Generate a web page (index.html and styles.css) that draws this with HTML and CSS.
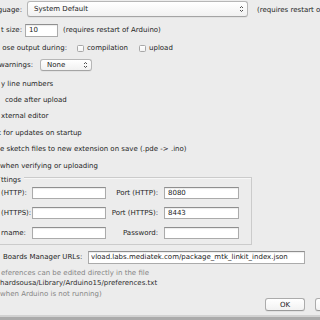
FILE: index.html
```html
<!DOCTYPE html>
<html>
<head>
<meta charset="utf-8">
<link rel="stylesheet" href="styles.css">
</head>
<body>
<div class="dlg">
  <div class="row r1">
    <span class="lab w22">guage:</span>
    <div class="combo c1"><span>System Default</span><svg class="arr" width="5" height="8" viewBox="0 0 5 8"><path d="M1 3L2.5 1.5L4 3M1 5L2.5 6.5L4 5"/></svg></div>
    <span class="note n1">(requires restart of Arduino)</span>
  </div>
  <div class="row r2">
    <span class="lab w22">t size:</span>
    <input class="field f-size" value="10">
    <span class="note n2">(requires restart of Arduino)</span>
  </div>
  <div class="row r3">
    <span class="lab w67">ose output during:</span>
    <span class="cb cb1"></span><span class="cbt ct1">compilation</span>
    <span class="cb cb2"></span><span class="cbt">upload</span>
  </div>
  <div class="row r4">
    <span class="lab w33">warnings:</span>
    <div class="combo c2"><span>None</span><svg class="arr" width="5" height="8" viewBox="0 0 5 8"><path d="M1 3L2.5 1.5L4 3M1 5L2.5 6.5L4 5"/></svg></div>
  </div>
  <div class="row chk h16 p1">y line numbers</div>
  <div class="row chk h16 p5">code after upload</div>
  <div class="row chk h16 p1">xternal editor</div>
  <div class="row chk h17 pk">k for updates on startup</div>
  <div class="row chk h16 p0">e sketch files to new extension on save (.pde -&gt; .ino)</div>
  <div class="row chk h17 p0">when verifying or uploading</div>
  <div class="group">
    <span class="group-title">ttings</span>
    <div class="row prow">
      <span class="pl">(HTTP):</span><input class="field pf" value="">
      <span class="pl2">Port (HTTP):</span><input class="field pf2" value="8080">
    </div>
    <div class="row prow">
      <span class="pl">(HTTPS):</span><input class="field pf" value="">
      <span class="pl2">Port (HTTPS):</span><input class="field pf2" value="8443">
    </div>
    <div class="row prow">
      <span class="pl">rname:</span><input class="field pf" value="">
      <span class="pl2">Password:</span><input class="field pf2" value="">
    </div>
  </div>
  <div class="row url">
    <span class="ul">Boards Manager URLs:</span>
    <input class="field uf" value="vload.labs.mediatek.com/package_mtk_linkit_index.json">
  </div>
  <div class="bottom">
    <div class="info">
      <div class="gray i1">eferences can be edited directly in the file</div>
      <div class="dark">hardsousa/Library/Arduino15/preferences.txt</div>
      <div class="gray">when Arduino is not running)</div>
    </div>
    <div class="buttons">
      <button class="btn">OK</button>
      <button class="btn">Cancel</button>
    </div>
  </div>
  <div class="strip"></div>
</div>
</body>
</html>
```
FILE: styles.css
```css
* { box-sizing: border-box; }
html, body { margin: 0; padding: 0; }
body {
  width: 320px;
  height: 320px;
  overflow: hidden;
  background: #ececec;
  font-family: "DejaVu Sans", sans-serif;
  font-size: 7px;
  color: #1e1e1e;
}
.dlg {
  display: flex;
  flex-direction: column;
  height: 320px;
  white-space: nowrap;
}
.row { display: flex; align-items: center; flex: none; }

.lab { display: flex; justify-content: flex-end; flex: none; }
.w22 { width: 22px; }
.w33 { width: 33px; }
.w67 { width: 67px; }

.combo {
  display: flex;
  align-items: center;
  justify-content: space-between;
  flex: none;
  background: linear-gradient(#ffffff, #f1f1f1);
  border: 1px solid #b6b6b6;
  border-bottom-color: #a4a4a4;
  border-radius: 3px;
  box-shadow: 0 1px 0 rgba(0,0,0,0.04);
  padding: 0 3px 0 6px;
}
.arr path { fill: none; stroke: #3a3a3a; stroke-width: 0.9; }

.r1 { height: 20px; }
.c1 { width: 221px; height: 16px; margin-left: 5px; align-self: flex-start; margin-top: 1px; }
.n1 { margin-left: 9px; }

.field {
  flex: none;
  border: 1px solid #ababab;
  border-top-color: #8f8f8f;
  background: #fff;
  font: inherit;
  color: #222;
  padding: 0 3px;
  margin: 0;
  outline: none;
  box-shadow: inset 0 1px 1px rgba(0,0,0,0.08);
}

.r2 { height: 20px; }
.f-size { width: 33px; height: 13px; margin-left: 3px; }
.n2 { margin-left: 5px; }

.r3 { height: 16px; }
.cb {
  flex: none;
  width: 7px;
  height: 7px;
  border: 1px solid #a8a8a8;
  border-radius: 1.5px;
  background: linear-gradient(#fff, #f2f2f2);
}
.cb1 { margin-left: 10px; }
.cbt { margin-left: 3px; }
.ct1 { width: 52px; }

.r4 { height: 18px; }
.c2 { width: 52px; height: 12px; margin-left: 7px; }

.chk { padding-top: 0; }
.h16 { height: 16px; }
.h17 { height: 17px; }
.p0 { padding-left: 0; }
.p1 { padding-left: 1px; }
.p5 { padding-left: 5px; }
.pk { margin-left: -3px; }
.r4 + .chk { margin-top: 2px; }

.group {
  position: relative;
  flex: none;
  margin: 3px 0 0 -10px;
  width: 262px;
  height: 68px;
  border: 1px solid #cbcbcb;
  box-shadow: inset 1px 1px 0 #f7f7f7;
  padding: 5px 0 0 10px;
}
.group-title {
  position: absolute;
  left: 10px;
  top: -2px;
  line-height: 8px;
  padding-right: 3px;
  background: #ececec;
}
.prow { height: 20px; }
.pl { width: 31px; flex: none; }
.pf { width: 74px; height: 12px; }
.pl2 { width: 52px; flex: none; display: flex; justify-content: flex-end; }
.pf2 { width: 75px; height: 12px; margin-left: 6px; }

.url { height: 24px; }
.ul { width: 88px; flex: none; padding-left: 3px; }
.uf { width: 217px; height: 13px; padding: 0 2px; }

.bottom {
  flex: 1;
  display: flex;
  justify-content: space-between;
  align-items: flex-start;
  min-height: 0;
}
.info { line-height: 10.3px; margin-top: -1px; }
.i1 { padding-left: 1px; }
.gray { color: #858585; }
.dark { color: #2e2e2e; }
.buttons {
  display: flex;
  gap: 10px;
  align-self: flex-end;
  margin: 0 -35px 4px 0;
}
.btn {
  width: 40px;
  height: 13px;
  padding: 0;
  font: inherit;
  color: #222;
  background: linear-gradient(#ffffff, #f2f2f2);
  border: 1px solid #ababab;
  border-bottom-color: #9a9a9a;
  border-radius: 3px;
  box-shadow: 0 1px 0 rgba(0,0,0,0.05);
}
.strip {
  flex: none;
  height: 5px;
  background: linear-gradient(#d2d2d2 0 2px, #ababab 2px);
}
```
